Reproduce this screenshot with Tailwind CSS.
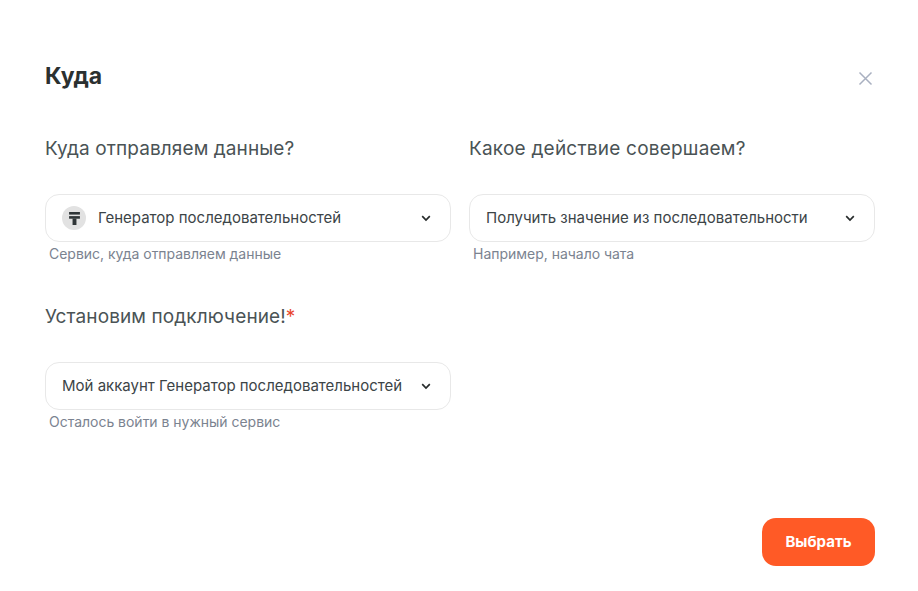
<!DOCTYPE html>
<html lang="ru">
<head>
<meta charset="utf-8">
<script src="https://cdn.jsdelivr.net/npm/@tailwindcss/browser@4"></script>
</head>
<body class="bg-white">
<div class="w-[918px] h-[591px] pl-[45px] pr-[43px] pt-[60px] flex flex-col font-['Inter',sans-serif] overflow-hidden">
  <div class="flex items-start justify-between h-[32px]">
    <h1 class="text-[23px] leading-[32px] font-bold text-[#2b3030]">Куда</h1>
    <button class="mt-[11px] mr-[2px] w-[15px] h-[15px] text-[#a9b0c0]">
      <svg viewBox="0 0 15 15" class="w-[15px] h-[15px]" fill="none" stroke="currentColor" stroke-width="1.5"><path d="M1.5 1.5L13.5 13.5M13.5 1.5L1.5 13.5"/></svg>
    </button>
  </div>
  <div class="grid grid-cols-2 gap-x-[18px] mt-[44px]">
    <div class="flex flex-col h-[168px]">
      <div class="text-[19px] tracking-[0.1px] leading-[26px] text-[#4a5355]">Куда отправляем данные?</div>
      <div class="mt-[32px] h-[48px] rounded-[14px] border border-[#e8e8e8] pl-[16px] pr-[18px] flex items-center">
        <span class="w-[24px] h-[24px] rounded-full bg-[#e2e2e2] flex items-center justify-center shrink-0">
          <svg viewBox="0 0 10 12" class="w-[11px] h-[13px]" fill="#2f3537"><rect x="0" y="0" width="10" height="2.4"/><rect x="0" y="3.8" width="10" height="2.4"/><rect x="3.2" y="6" width="3.6" height="6"/></svg>
        </span>
        <span class="ml-[12px] text-[15px] leading-[20px] text-[#3c4447] whitespace-nowrap">Генератор последовательностей</span>
        <svg viewBox="0 0 12 12" class="ml-auto w-[12px] h-[12px]" fill="none" stroke="#262b2b" stroke-width="1.7"><path d="M2.2 4.2L6 8L9.8 4.2"/></svg>
      </div>
      <div class="mt-[2px] ml-[4px] text-[14px] tracking-[-0.02px] leading-[20px] text-[#7b8390]">Сервис, куда отправляем данные</div>
    </div>
    <div class="flex flex-col h-[168px]">
      <div class="text-[19px] tracking-[0.22px] leading-[26px] text-[#4a5355]">Какое действие совершаем?</div>
      <div class="mt-[32px] h-[48px] rounded-[14px] border border-[#e8e8e8] pl-[16px] pr-[18px] flex items-center">
        <span class="text-[15px] leading-[20px] text-[#3c4447] whitespace-nowrap">Получить значение из последовательности</span>
        <svg viewBox="0 0 12 12" class="ml-auto w-[12px] h-[12px]" fill="none" stroke="#262b2b" stroke-width="1.7"><path d="M2.2 4.2L6 8L9.8 4.2"/></svg>
      </div>
      <div class="mt-[2px] ml-[4px] text-[14px] tracking-[-0.02px] leading-[20px] text-[#7b8390]">Например, начало чата</div>
    </div>
    <div class="flex flex-col">
      <div class="text-[19px] tracking-[0.11px] leading-[26px] text-[#4a5355]">Установим подключение!<span class="text-[#e8472b]">*</span></div>
      <div class="mt-[32px] h-[48px] rounded-[14px] border border-[#e8e8e8] pl-[16px] pr-[18px] flex items-center">
        <span class="text-[15px] leading-[20px] text-[#3c4447] whitespace-nowrap">Мой аккаунт Генератор последовательностей</span>
        <svg viewBox="0 0 12 12" class="ml-auto w-[12px] h-[12px]" fill="none" stroke="#262b2b" stroke-width="1.7"><path d="M2.2 4.2L6 8L9.8 4.2"/></svg>
      </div>
      <div class="mt-[2px] ml-[4px] text-[14px] tracking-[-0.02px] leading-[20px] text-[#7b8390]">Осталось войти в нужный сервис</div>
    </div>
  </div>
  <div class="flex justify-end mt-[86px]">
    <button class="w-[113px] h-[48px] rounded-[14px] bg-[#ff5a26] text-white text-[15px] font-bold">Выбрать</button>
  </div>
</div>
</body>
</html>
